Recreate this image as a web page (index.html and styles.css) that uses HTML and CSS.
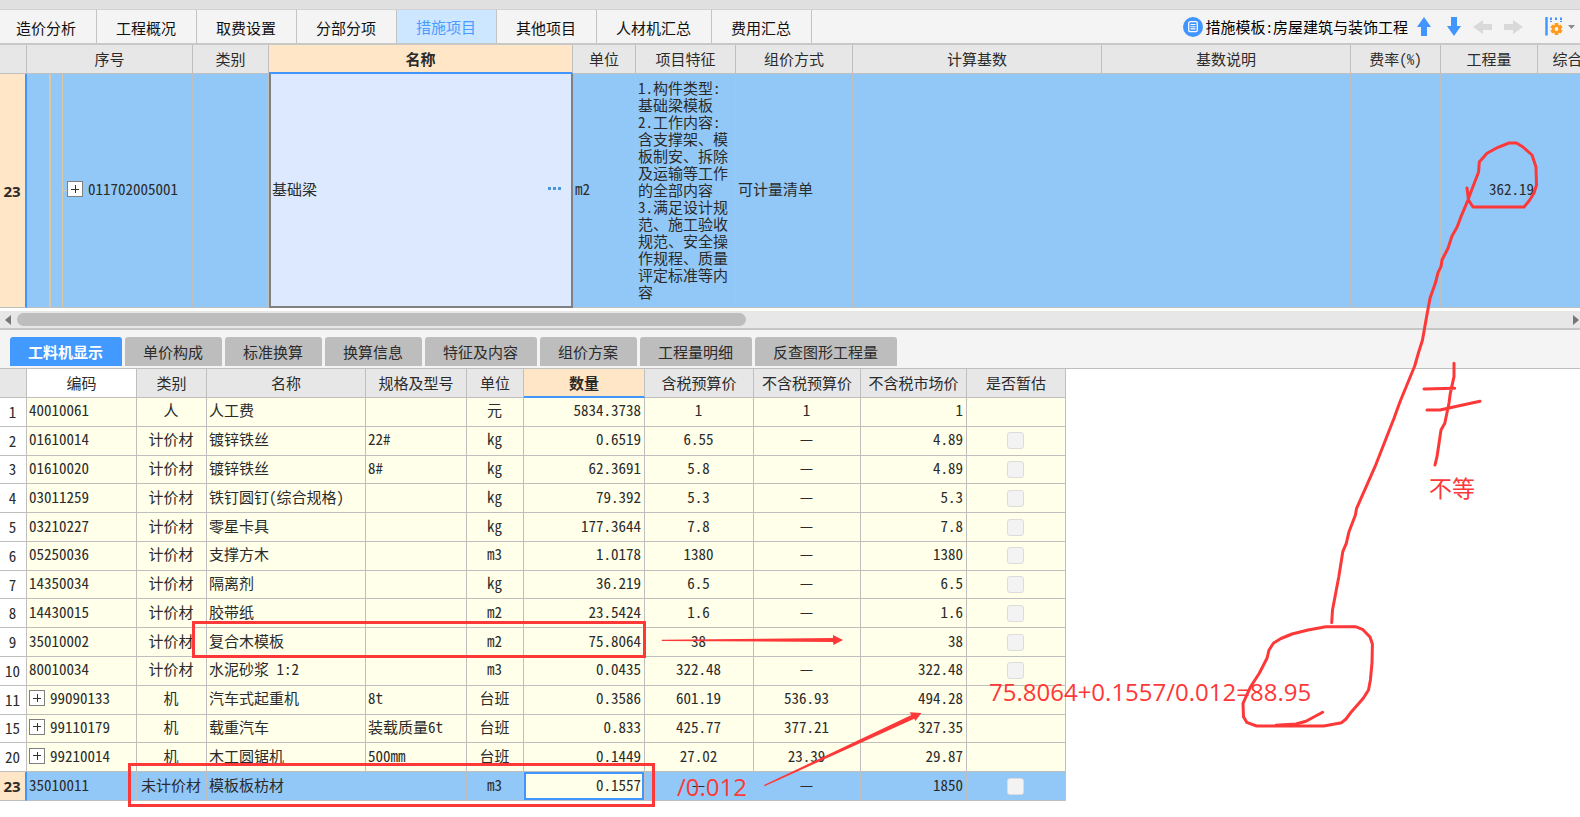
FILE: index.html
```html
<!DOCTYPE html>
<html lang="zh-CN">
<head>
<meta charset="utf-8">
<title>措施项目</title>
<link rel="stylesheet" href="styles.css">
</head>
<body>
<div class="strip"></div>
<header class="topbar">
  <nav class="main-tabs">
    <button class="main-tab">造价分析</button>
    <button class="main-tab">工程概况</button>
    <button class="main-tab">取费设置</button>
    <button class="main-tab">分部分项</button>
    <button class="main-tab active">措施项目</button>
    <button class="main-tab">其他项目</button>
    <button class="main-tab">人材机汇总</button>
    <button class="main-tab">费用汇总</button>
  </nav>
  <div class="tools">
    <button class="tool template">
      <svg width="20" height="20" viewBox="0 0 20 20"><circle cx="10" cy="10" r="10" fill="#4095ff"/><rect x="5.7" y="4.7" width="8.6" height="10" rx="1.5" fill="none" stroke="#fff" stroke-width="1.3"/><path d="M7.5 7.5h5M7.5 9.7h5M7.5 11.9h5" stroke="#fff" stroke-width="1.1"/></svg>
      <span>措施模板:房屋建筑与装饰工程</span>
    </button>
    <button class="tool up" aria-label="上移"><svg width="14" height="19" viewBox="0 0 14 19"><path d="M7 0l7 10h-4v9H4v-9H0z" fill="#4095ff"/></svg></button>
    <button class="tool down" aria-label="下移"><svg width="14" height="19" viewBox="0 0 14 19"><path d="M7 19l7-10h-4V0H4v9H0z" fill="#4095ff"/></svg></button>
    <button class="tool left" aria-label="升级"><svg width="19" height="14" viewBox="0 0 19 14"><path d="M0 7l10-7v4h9v6h-9v4z" fill="#d9d9d9"/></svg></button>
    <button class="tool right" aria-label="降级"><svg width="19" height="14" viewBox="0 0 19 14"><path d="M19 7L9 0v4H0v6h9v4z" fill="#d9d9d9"/></svg></button>
    <button class="tool settings" aria-label="列设置">
      <svg width="18" height="19" viewBox="0 0 18 19"><path d="M1.5 0v18.500" stroke="#4095ff" stroke-width="2.400"/><path d="M6 .5v4.500M11 .5v3M16 .5v4.500" stroke="#4095ff" stroke-width="2" stroke-dasharray="2.500 1"/><g fill="#ff9a1f"><circle cx="11.500" cy="12" r="4.600"/><path d="M9.700 6h3.600v12H9.700z"/><path d="M9.700 6h3.600v12H9.700z" transform="rotate(60 11.500 12)"/><path d="M9.700 6h3.600v12H9.700z" transform="rotate(120 11.500 12)"/></g><circle cx="11.500" cy="12" r="1.900" fill="#f4f4f4"/></svg>
      <svg width="7" height="4" viewBox="0 0 7 4"><path d="M0 0h7L3.500 4z" fill="#8c8c8c"/></svg>
    </button>
  </div>
</header>

<section class="items">
  <table class="grid items-grid">
    <colgroup><col class="i0"><col class="i1"><col class="i2"><col class="i3"><col class="i4"><col class="i5"><col class="i6"><col class="i7"><col class="i7"><col class="i9"><col class="i10"><col class="i9"></colgroup>
    <thead><tr><th></th><th>序号</th><th>类别</th><th class="current">名称</th><th>单位</th><th>项目特征</th><th>组价方式</th><th>计算基数</th><th>基数说明</th><th>费率(%)</th><th>工程量</th><th>综合单价</th></tr></thead>
    <tbody><tr class="selected">
      <th class="rownum">23</th>
      <td class="tree"><div class="tree-in"><button class="plus" aria-label="展开"></button>011702005001</div></td>
      <td></td>
      <td class="editing"><div class="edit-in"><span>基础梁</span><button class="more" aria-label="更多"><i></i><i></i><i></i></button></div></td>
      <td>m2</td>
      <td class="feature">1.构件类型:<br>基础梁模板<br>2.工作内容:<br>含支撑架、模<br>板制安、拆除<br>及运输等工作<br>的全部内容<br>3.满足设计规<br>范、施工验收<br>规范、安全操<br>作规程、质量<br>评定标准等内<br>容</td>
      <td>可计量清单</td><td></td><td></td><td></td>
      <td class="num">362.19</td><td></td>
    </tr></tbody>
  </table>
</section>

<div class="scrollbar">
  <button class="scroll-arrow" aria-label="向左"><svg width="6" height="10" viewBox="0 0 6 10"><path d="M6 0v10L0 5z" fill="#757575"/></svg></button>
  <div class="track"><div class="thumb"></div></div>
  <button class="scroll-arrow" aria-label="向右"><svg width="6" height="10" viewBox="0 0 6 10"><path d="M0 0v10l6-5z" fill="#757575"/></svg></button>
</div>

<nav class="sub-tabs">
  <button class="sub-tab active">工料机显示</button>
  <button class="sub-tab">单价构成</button>
  <button class="sub-tab">标准换算</button>
  <button class="sub-tab">换算信息</button>
  <button class="sub-tab">特征及内容</button>
  <button class="sub-tab">组价方案</button>
  <button class="sub-tab">工程量明细</button>
  <button class="sub-tab">反查图形工程量</button>
</nav>

<table class="grid detail-grid">
  <colgroup><col class="d0"><col class="d1"><col class="d2"><col class="d3"><col class="d4"><col class="d5"><col class="d6"><col class="d7"><col class="d8"><col class="d9"><col class="d10"></colgroup>
  <thead><tr><th></th><th class="white">编码</th><th>类别</th><th>名称</th><th>规格及型号</th><th>单位</th><th class="current">数量</th><th>含税预算价</th><th>不含税预算价</th><th>不含税市场价</th><th>是否暂估</th></tr></thead>
  <tbody>
    <tr><th class="rownum">1</th><td>40010061</td><td class="mid">人</td><td>人工费</td><td></td><td class="mid">元</td><td class="num">5834.3738</td><td class="mid">1</td><td class="mid">1</td><td class="num">1</td><td></td></tr>
    <tr><th class="rownum">2</th><td>01610014</td><td class="mid">计价材</td><td>镀锌铁丝</td><td>22#</td><td class="mid">kg</td><td class="num">0.6519</td><td class="mid">6.55</td><td class="mid">—</td><td class="num">4.89</td><td class="check"><input type="checkbox" aria-label="是否暂估 2"></td></tr>
    <tr><th class="rownum">3</th><td>01610020</td><td class="mid">计价材</td><td>镀锌铁丝</td><td>8#</td><td class="mid">kg</td><td class="num">62.3691</td><td class="mid">5.8</td><td class="mid">—</td><td class="num">4.89</td><td class="check"><input type="checkbox" aria-label="是否暂估 3"></td></tr>
    <tr><th class="rownum">4</th><td>03011259</td><td class="mid">计价材</td><td>铁钉圆钉(综合规格)</td><td></td><td class="mid">kg</td><td class="num">79.392</td><td class="mid">5.3</td><td class="mid">—</td><td class="num">5.3</td><td class="check"><input type="checkbox" aria-label="是否暂估 4"></td></tr>
    <tr><th class="rownum">5</th><td>03210227</td><td class="mid">计价材</td><td>零星卡具</td><td></td><td class="mid">kg</td><td class="num">177.3644</td><td class="mid">7.8</td><td class="mid">—</td><td class="num">7.8</td><td class="check"><input type="checkbox" aria-label="是否暂估 5"></td></tr>
    <tr><th class="rownum">6</th><td>05250036</td><td class="mid">计价材</td><td>支撑方木</td><td></td><td class="mid">m3</td><td class="num">1.0178</td><td class="mid">1380</td><td class="mid">—</td><td class="num">1380</td><td class="check"><input type="checkbox" aria-label="是否暂估 6"></td></tr>
    <tr><th class="rownum">7</th><td>14350034</td><td class="mid">计价材</td><td>隔离剂</td><td></td><td class="mid">kg</td><td class="num">36.219</td><td class="mid">6.5</td><td class="mid">—</td><td class="num">6.5</td><td class="check"><input type="checkbox" aria-label="是否暂估 7"></td></tr>
    <tr><th class="rownum">8</th><td>14430015</td><td class="mid">计价材</td><td>胶带纸</td><td></td><td class="mid">m2</td><td class="num">23.5424</td><td class="mid">1.6</td><td class="mid">—</td><td class="num">1.6</td><td class="check"><input type="checkbox" aria-label="是否暂估 8"></td></tr>
    <tr><th class="rownum">9</th><td>35010002</td><td class="mid">计价材</td><td>复合木模板</td><td></td><td class="mid">m2</td><td class="num">75.8064</td><td class="mid">38</td><td class="mid"></td><td class="num">38</td><td class="check"><input type="checkbox" aria-label="是否暂估 9"></td></tr>
    <tr><th class="rownum">10</th><td>80010034</td><td class="mid">计价材</td><td>水泥砂浆 1:2</td><td></td><td class="mid">m3</td><td class="num">0.0435</td><td class="mid">322.48</td><td class="mid">—</td><td class="num">322.48</td><td class="check"><input type="checkbox" aria-label="是否暂估 10"></td></tr>
    <tr><th class="rownum">11</th><td><div class="node"><button class="plus" aria-label="展开"></button>99090133</div></td><td class="mid">机</td><td>汽车式起重机</td><td>8t</td><td class="mid">台班</td><td class="num">0.3586</td><td class="mid">601.19</td><td class="mid">536.93</td><td class="num">494.28</td><td></td></tr>
    <tr><th class="rownum">15</th><td><div class="node"><button class="plus" aria-label="展开"></button>99110179</div></td><td class="mid">机</td><td>载重汽车</td><td>装载质量6t</td><td class="mid">台班</td><td class="num">0.833</td><td class="mid">425.77</td><td class="mid">377.21</td><td class="num">327.35</td><td></td></tr>
    <tr><th class="rownum">20</th><td><div class="node"><button class="plus" aria-label="展开"></button>99210014</div></td><td class="mid">机</td><td>木工圆锯机</td><td>500mm</td><td class="mid">台班</td><td class="num">0.1449</td><td class="mid">27.02</td><td class="mid">23.39</td><td class="num">29.87</td><td></td></tr>
    <tr class="selected"><th class="rownum">23</th><td>35010011</td><td class="mid">未计价材</td><td>模板板枋材</td><td></td><td class="mid">m3</td><td class="num focus">0.1557</td><td class="mid">—</td><td class="mid">—</td><td class="num">1850</td><td class="check"><input type="checkbox" aria-label="是否暂估 23"></td></tr>
  </tbody>
</table>

<svg class="marks" width="1580" height="817" viewBox="0 0 1580 817">
  <g class="pen">
    <path d="M1467 188L1468.500 200L1473 207H1524L1529 201L1534 193L1536.500 185L1536 167L1532 155L1523 147L1516.500 143H1509L1498 147.300L1487 153.300L1479.300 162L1478.600 172L1471 191.700L1468 200L1461 216.700L1457 227.300L1452 236L1448 248.300L1442 260L1441 266.700L1438 272.700L1435.300 283.300L1430 298.300L1426 320L1422.500 340L1418.700 352L1414.700 366L1400 401.700L1394 418.300L1375 466.700L1356.600 508.300L1355.400 515L1349 531.700L1346.300 543.300L1342.800 551.700L1338.800 576.700L1332.500 610L1331.700 622.700"/>
    <path d="M1355.400 626.700L1362.500 629.300L1370 637L1372.400 644L1372 663L1370.400 680L1368.500 690L1363.300 698.300L1351.500 711.700L1346 719L1341.600 722.700L1323.800 726H1256.600L1246.700 722.300L1243.500 716.700L1243 703.300L1250.600 686.700L1259.300 673.300L1267 658.300L1269 650L1273.600 643L1281 638.500L1292 634L1308 630L1325.800 626.700Z"/>
    <path d="M1276 725.300L1296 724L1306 721.300L1322.600 712.300"/>
    <path d="M1454 363.300V376.700L1450.300 393.300L1449 403L1444.800 423.300L1441 430L1437 456.700L1435 465M1424 389L1454.600 388.300M1427 410H1440L1458 406L1480 401.300"/>
    <rect x="193.500" y="622.500" width="451" height="34"/>
    <rect x="129.500" y="764.500" width="524" height="41"/>
  </g>
  <g class="ink">
    <path d="M661.800 639.700L833 638L833 635L843 640L833.500 645L833 642L661.800 641Z"/>
    <path d="M764 785L911.400 715L909.600 712.300L921.400 713L915.400 721L914.300 718.700L764.500 786.300Z"/>
    <text class="note" x="989" y="701">75.8064+0.1557/0.012=88.95</text>
    <text class="note" x="677" y="796">/0.012</text>
    <text class="note-cjk" x="1429" y="497">不等</text>
  </g>
</svg>
</body>
</html>
```
FILE: styles.css
```css
* {
  box-sizing: border-box;
}

body {
  position: relative;
  margin: 0;
  min-height: 100vh;
  overflow: hidden;
  background: #fff;
  color: #2b2b2b;
  font: 15px/18px "Noto Sans Mono CJK SC", "Noto Sans CJK SC", "Liberation Mono", monospace;
}

button {
  margin: 0;
  padding: 0;
  border: 0;
  background: none;
  color: inherit;
  font: inherit;
}

.strip {
  height: 10px;
  background: #e0e0e0;
  border-bottom: 1px solid #d2d2d2;
}

.topbar {
  display: flex;
  justify-content: space-between;
  height: 35px;
  background: #f4f4f4;
  border-bottom: 2px solid #c8c8c8;
}

.main-tabs {
  display: flex;
}

.main-tab {
  padding: 3px 20px 0 19px;
  border-right: 1px solid #c3c3c3;
  color: #111;
}

.main-tab:first-child {
  padding-left: 16px;
}

.main-tab.active {
  padding-top: 0;
  background: #cce7ff;
  color: #4a9bff;
}

.tools {
  display: flex;
  align-items: center;
  gap: 12px;
  padding-right: 5px;
  color: #000;
}

.tool {
  display: flex;
  align-items: center;
}

.tool svg {
  display: block;
}

.template {
  gap: 2px;
}

.up {
  margin-left: -3px;
}

.down {
  margin-left: 4px;
}

.settings {
  gap: 5px;
  margin-left: 10px;
}

.grid {
  table-layout: fixed;
  border-collapse: separate;
  border-spacing: 0;
}

.grid th,
.grid td {
  padding: 0 3px 3px 2px;
  border-right: 1px solid #bfbfbf;
  border-bottom: 1px solid #bfbfbf;
  font-weight: 400;
  text-align: left;
  white-space: nowrap;
}

.grid thead th {
  padding: 0;
  background: #e7e7e7;
  text-align: center;
}

.grid thead .current {
  background: #ffe6c7;
  border-bottom: 2px solid #4095ff;
  font-weight: 700;
}

.grid thead .white {
  background: #fff;
}

.grid .rownum {
  padding: 0 1px 0 0;
  text-align: center;
}

.grid .num {
  text-align: right;
}

.grid .mid {
  padding: 0 1px 3px 0;
  text-align: center;
}

.grid .check {
  padding: 0 1px 0 0;
}

.grid .selected td {
  background: #92c8f7;
}

.grid .selected .rownum {
  background: #ffe6c7;
  border-right: 2px solid #4095ff;
  font: 700 15px/18px "Open Sans", sans-serif;
}

.items {
  overflow: hidden;
}

.items-grid {
  width: 1628px;
}

.items-grid thead tr {
  height: 29px;
}

.items-grid tbody tr {
  height: 234px;
}

.i0, .d0 { width: 27px; }
.i1 { width: 166px; }
.i2 { width: 76px; }
.i3 { width: 304px; }
.i4 { width: 63px; }
.i5 { width: 100px; }
.i6 { width: 117px; }
.i7 { width: 249px; }
.i9 { width: 90px; }
.i10 { width: 97px; }

.grid .feature {
  line-height: 17px;
}

.grid .selected .tree {
  padding: 0 0 3px;
  background:
    linear-gradient(#dcc9a4, #dcc9a4) 22px 0 / 2px 100% no-repeat,
    linear-gradient(#dcc9a4, #dcc9a4) 35px 0 / 1px 100% no-repeat,
    linear-gradient(#dcc9a4, #dcc9a4) 35px 50% / 6px 1px no-repeat,
    #92c8f7;
}

.node,
.tree-in {
  display: flex;
  align-items: center;
  gap: 5px;
}

.tree-in {
  padding-left: 40px;
}

.plus {
  width: 16px;
  height: 16px;
  border: 1px solid #808080;
  background:
    linear-gradient(#333, #333) center / 8px 1px no-repeat,
    linear-gradient(#333, #333) center / 1px 8px no-repeat,
    #fff;
}

.grid .selected .editing {
  padding: 0 10px 3px 1px;
  background: #dde9fe;
  border: 2px solid #808080;
  border-top: 0;
}

.edit-in {
  display: flex;
  align-items: center;
  justify-content: space-between;
}

.more {
  display: flex;
  gap: 2px;
  padding: 4px 0;
}

.more i {
  width: 3px;
  height: 3px;
  background: #4a96d8;
}

.scrollbar {
  display: flex;
  align-items: center;
  gap: 6px;
  height: 22px;
  padding: 0 1px 0 5px;
  background: #e7e7e7;
  border-top: 3px solid #fff;
  border-bottom: 2px solid #c6c6c6;
}

.scroll-arrow {
  display: flex;
}

.track {
  flex: 1;
}

.thumb {
  width: 47%;
  height: 13px;
  border-radius: 7px;
  background: #bdbdbd;
}

.sub-tabs {
  display: flex;
  gap: 3px;
  height: 39px;
  padding: 7px 10px 2px;
  background: #f4f4f4;
  border-bottom: 1px solid #bfbfbf;
}

.sub-tab {
  padding: 0 19px 0 18px;
  border-radius: 3px 3px 0 0;
  background: #bdbdbd;
}

.sub-tab.active {
  background: #4299ff;
  color: #fff;
  font-weight: 700;
}

.detail-grid {
  width: 1066px;
  height: 432px;
}

.detail-grid thead tr {
  height: 29px;
}

.detail-grid tbody tr {
  height: 28px;
}

.d1 { width: 110px; }
.d2 { width: 70px; }
.d3 { width: 159px; }
.d4 { width: 101px; }
.d5 { width: 57px; }
.d6 { width: 121px; }
.d7 { width: 109px; }
.d8 { width: 107px; }
.d9 { width: 106px; }
.d10 { width: 99px; }

.detail-grid td {
  background: #ffffea;
}

.grid .selected .focus {
  background: #ffffea;
  box-shadow: inset 0 0 0 2px #4095ff;
}

input[type="checkbox"] {
  appearance: none;
  display: block;
  width: 17px;
  height: 17px;
  margin: 0 auto;
  border: 1px solid #dcdcdc;
  border-radius: 3px;
  background: #f3f3f3;
}

.marks {
  position: absolute;
  top: 0;
  left: 0;
  pointer-events: none;
}

.pen {
  fill: none;
  stroke: #fd3838;
  stroke-width: 3;
  stroke-linecap: round;
  stroke-linejoin: round;
}

.pen rect {
  stroke-linejoin: miter;
}

.ink {
  fill: #fd3838;
}

.note {
  font: 24px "Open Sans", sans-serif;
}

.note-cjk {
  font: 23px "Noto Sans CJK SC", sans-serif;
}
```
